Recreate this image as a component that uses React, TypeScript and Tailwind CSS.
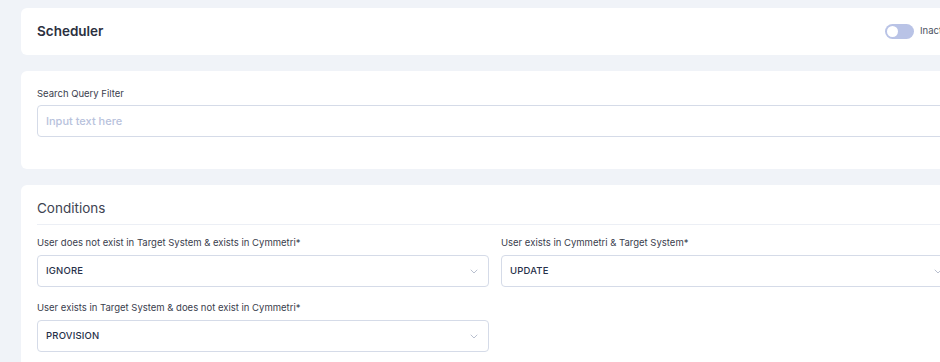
import React from 'react';

const Chevron: React.FC = () => (
  <svg width="8" height="5" viewBox="0 0 8 5" fill="none" className="shrink-0">
    <path d="M1 1l3 3 3-3" stroke="#b9c0cf" strokeWidth="1" strokeLinecap="round" strokeLinejoin="round" />
  </svg>
);

const SelectField: React.FC<{ label: string; value: string }> = ({ label, value }) => (
  <div className="flex flex-col">
    <label className="h-[19px] text-[9.5px] leading-[19px] text-[#3a404d]">{label}</label>
    <div className="mt-[3px] h-[32px] flex items-center justify-between rounded-[4px] border border-[#d5dbe8] bg-white pl-[8px] pr-[10px]">
      <span className="text-[9.5px] font-medium tracking-[0.02em] text-[#27314a]">{value}</span>
      <Chevron />
    </div>
  </div>
);

export default function App() {
  return (
    <div className="w-[940px] h-[362px] overflow-hidden bg-[#f0f3f8]" style={{ fontFamily: 'Inter, "Noto Sans", sans-serif' }}>
      <div className="w-[969px] pl-[21px] pt-[8px] flex flex-col gap-[16px]">
        {/* Header card */}
        <div className="h-[47px] rounded-[6px] bg-white flex items-center justify-between px-[16px]">
          <h1 className="text-[13.5px] font-semibold text-[#2b3040]">Scheduler</h1>
          <div className="flex items-center gap-[6px] mr-[-2px]">
            <div className="w-[29px] h-[15px] rounded-full bg-[#b9c3e6] flex items-center px-[2px]">
              <div className="w-[11px] h-[11px] rounded-full bg-white" />
            </div>
            <span className="text-[9.5px] text-[#4b5262]">Inactive</span>
          </div>
        </div>

        {/* Search card */}
        <div className="h-[98px] rounded-[6px] bg-white px-[16px] pt-[15px]">
          <label className="block h-[16px] text-[9.5px] leading-[16px] text-[#3a404d]">Search Query Filter</label>
          <div className="mt-[3px] h-[32px] rounded-[4px] border border-[#d5dbe8] flex items-center px-[8px]">
            <input
              className="w-full outline-none text-[11px] font-medium text-[#27314a] placeholder:text-[#b8c2dc] bg-transparent"
              placeholder="Input text here"
            />
          </div>
        </div>

        {/* Conditions card */}
        <div className="h-[200px] rounded-[6px] bg-white px-[16px]">
          <div className="h-[40px] flex items-center border-b border-[#eceff5] pt-[7px]">
            <h2 className="text-[13.5px] text-[#3e4452]">Conditions</h2>
          </div>
          <div className="grid grid-cols-2 gap-x-[12px] gap-y-[11px] pt-[8px]">
            <SelectField label="User does not exist in Target System & exists in Cymmetri*" value="IGNORE" />
            <SelectField label="User exists in Cymmetri & Target System*" value="UPDATE" />
            <SelectField label="User exists in Target System & does not exist in Cymmetri*" value="PROVISION" />
          </div>
        </div>
      </div>
    </div>
  );
}
